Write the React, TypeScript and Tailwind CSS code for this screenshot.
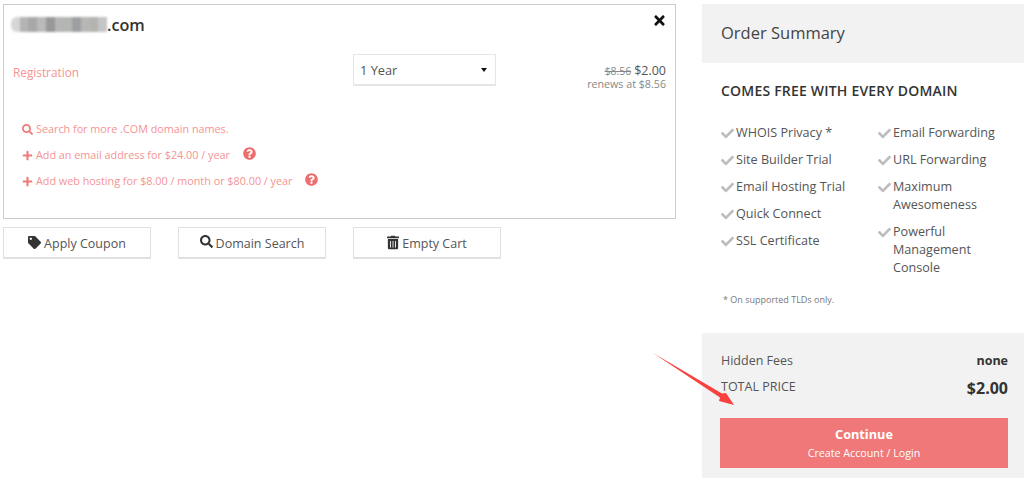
import React from 'react';
import { FaCheck, FaPlus, FaQuestionCircle, FaSearch, FaTag, FaTimes, FaTrashAlt } from 'react-icons/fa';

const leftFeatures = ['WHOIS Privacy *', 'Site Builder Trial', 'Email Hosting Trial', 'Quick Connect', 'SSL Certificate'];
const rightFeatures = ['Email Forwarding', 'URL Forwarding', 'Maximum Awesomeness', 'Powerful Management Console'];
const blurColors = ['#d6d6d6', '#b4b4b4', '#a8a8a8', '#b9bab9', '#989899', '#b5b5b5', '#b4b6b4', '#9d9fa3', '#b7b7b5', '#b5b3b0', '#c4c5c7'];

const Feature = ({ label }: { label: string }) => (
  <li className="flex items-start mb-[9px]">
    <FaCheck className="w-[13px] h-[13px] text-[#bdbdbd] mt-[3px] mr-[2px] shrink-0" />
    <span>{label}</span>
  </li>
);

const App = () => {
  return (
    <div className="relative w-[1024px] h-[478px] overflow-hidden bg-white flex text-[#555] font-['Open_Sans',sans-serif]">
      {/* Cart */}
      <div className="w-[673px] ml-[3px] mt-[4px] mr-[26px] shrink-0">
        <div className="h-[215px] border border-[#ccc] pl-[9px] pr-[9px] relative">
          <div className="flex items-center h-[15px] mt-[12px] -ml-[2px]">
            <div className="flex w-[96px] h-[15px] blur-[1px] rounded-l-[6px] overflow-hidden">
              {blurColors.map((c, i) => (
                <div key={i} className="flex-1" style={{ backgroundColor: c }} />
              ))}
            </div>
            <span className="pt-[2px] text-[16.2px] font-semibold text-[#333] leading-none">.com</span>
          </div>
          <FaTimes className="absolute top-[8px] right-[9px] w-[13px] h-[15px] text-[#111]" />

          <div className="flex mt-[22px] h-[32px]">
            <div className="w-[340px] pt-[2px] text-[11.8px] leading-[32px] text-[#f59393]">Registration</div>
            <div className="w-[143px] h-[32px] border border-[#e6e6e6] border-b-2 flex items-center justify-between pl-[6px] pr-[8px] text-[12.8px]">
              <span className="pt-[3px]">1 Year</span>
              <span className="w-0 h-0 border-x-[3.5px] border-x-transparent border-t-[4px] border-t-[#111]" />
            </div>
            <div className="flex-1 text-right pt-[10px]">
              <div className="text-[12.5px] leading-[14px] text-[#555]">
                <span className="text-[10.4px] text-[#888] line-through mr-[3px]">$8.56</span>$2.00
              </div>
              <div className="text-[10.7px] leading-[12px] text-[#888]">renews at $8.56</div>
            </div>
          </div>

          <div className="mt-[30px] pl-[9px] text-[10.8px] text-[#f59393] leading-[26px]">
            <div className="flex items-center">
              <FaSearch className="w-[11px] h-[11px] text-[#f07878] mr-[3px]" />
              Search for more .COM domain names.
            </div>
            <div className="flex items-center">
              <FaPlus className="w-[11px] h-[11px] text-[#f07878] mr-[3px]" />
              Add an email address for $24.00 / year
              <FaQuestionCircle className="w-[13px] h-[13px] text-[#ee6e6e] ml-[13px] mb-[3px]" />
            </div>
            <div className="flex items-center">
              <FaPlus className="w-[11px] h-[11px] text-[#f07878] mr-[3px]" />
              Add web hosting for $8.00 / month or $80.00 / year
              <FaQuestionCircle className="w-[13px] h-[13px] text-[#ee6e6e] ml-[12px] mb-[3px]" />
            </div>
          </div>
        </div>

        <div className="flex gap-[27px] mt-[8px]">
          <button className="w-[148px] h-[32px] border border-[#e0e0e0] border-b-2 flex items-center justify-center text-[12.5px]">
            <FaTag className="w-[13px] h-[13px] text-[#333] mr-[3px] mb-[1px]" />
            <span className="pt-[4px]">Apply Coupon</span>
          </button>
          <button className="w-[148px] h-[32px] border border-[#e0e0e0] border-b-2 flex items-center justify-center text-[12.5px]">
            <FaSearch className="w-[13px] h-[13px] text-[#333] mr-[3px] mb-[2px]" />
            <span className="pt-[4px]">Domain Search</span>
          </button>
          <button className="w-[148px] h-[32px] border border-[#e0e0e0] border-b-2 flex items-center justify-center text-[12.5px]">
            <FaTrashAlt className="w-[12px] h-[15px] text-[#333] mr-[3px] mb-[1px]" />
            <span className="pt-[4px]">Empty Cart</span>
          </button>
        </div>
      </div>

      {/* Order summary */}
      <div className="w-[322px] flex flex-col mt-[4px]">
        <div className="h-[59px] bg-[#f2f2f2] pl-[19px] flex items-center text-[16.5px] font-medium text-[#444]">
          Order Summary
        </div>
        <div className="h-[270px] pl-[19px] pt-[20px]">
          <div className="text-[14px] font-semibold text-[#333] leading-[16px] tracking-[0.2px]">COMES FREE WITH EVERY DOMAIN</div>
          <div className="flex mt-[25px] text-[12.6px] leading-[18px]">
            <ul className="w-[157px]">
              {leftFeatures.map((f) => <Feature key={f} label={f} />)}
            </ul>
            <ul className="w-[130px]">
              {rightFeatures.map((f) => <Feature key={f} label={f} />)}
            </ul>
          </div>
          <div className="absolute top-[294px] left-[723px] text-[9px] text-[#777] leading-[12px]">* On supported TLDs only.</div>
        </div>
        <div className="flex-1 bg-[#f2f2f2] pl-[18px] pt-[18px] pr-[16px]">
          <div className="flex justify-between items-center h-[20px] text-[12.5px]">
            <span className="ml-[1px]">Hidden Fees</span>
            <span className="font-bold text-[#333]">none</span>
          </div>
          <div className="flex justify-between h-[32px] mt-[6px] items-start">
            <span className="ml-[1px] text-[12.5px] leading-[20px]">TOTAL PRICE</span>
            <span className="text-[16px] font-bold text-[#333] leading-[22px]">$2.00</span>
          </div>
          <button className="w-full h-[50px] mt-[9px] pb-[2px] bg-[#f07878] text-white flex flex-col items-center justify-center">
            <span className="text-[12.7px] font-bold leading-[20px]">Continue</span>
            <span className="text-[10.7px] leading-[16px] mt-[1px]">Create Account / Login</span>
          </button>
        </div>
      </div>

      {/* Annotation arrow */}
      <svg className="absolute left-[650px] top-[350px]" width="90" height="58" viewBox="0 0 90 58">
        <path d="M3 3 L72 43.5 L76 43 L84 55 L69 51 L70 47.5 Z" fill="#f9413f" />
      </svg>
    </div>
  );
};

export default App;
